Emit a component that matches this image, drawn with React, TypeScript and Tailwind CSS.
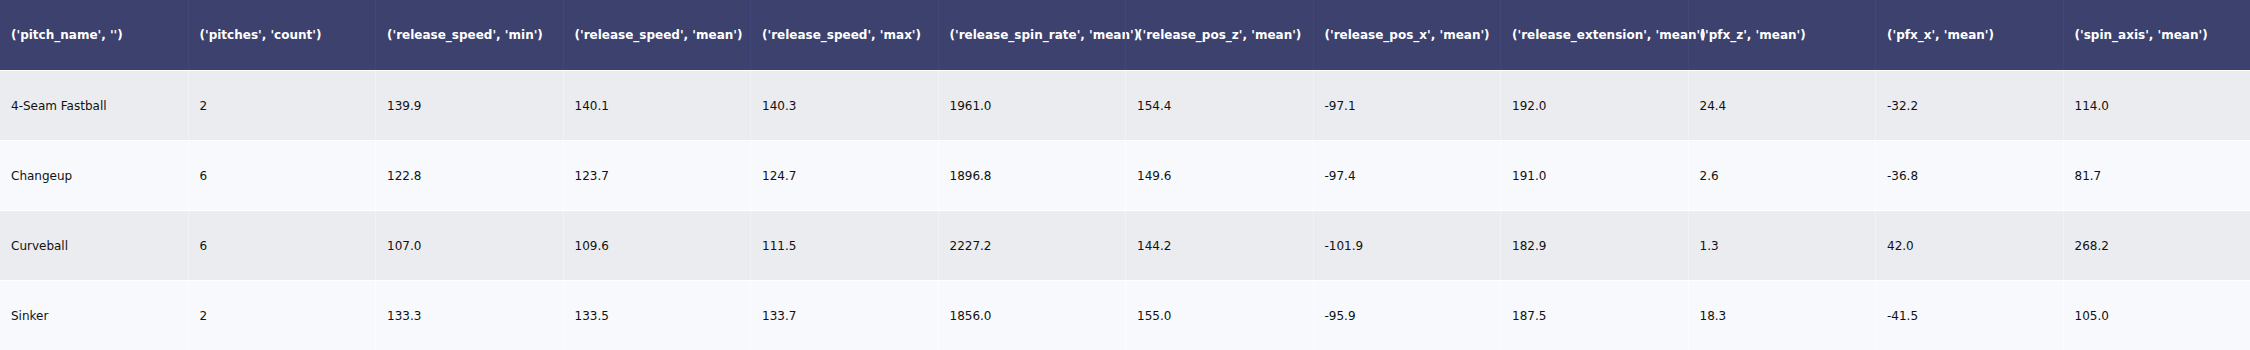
import * as React from "react";

/* ------------------------------ Data ------------------------------ */
const COLUMNS = [
  "('pitch_name', '')",
  "('pitches', 'count')",
  "('release_speed', 'min')",
  "('release_speed', 'mean')",
  "('release_speed', 'max')",
  "('release_spin_rate', 'mean')",
  "('release_pos_z', 'mean')",
  "('release_pos_x', 'mean')",
  "('release_extension', 'mean')",
  "('pfx_z', 'mean')",
  "('pfx_x', 'mean')",
  "('spin_axis', 'mean')",
];

const ROWS: string[][] = [
  ["4-Seam Fastball", "2", "139.9", "140.1", "140.3", "1961.0", "154.4", "-97.1", "192.0", "24.4", "-32.2", "114.0"],
  ["Changeup", "6", "122.8", "123.7", "124.7", "1896.8", "149.6", "-97.4", "191.0", "2.6", "-36.8", "81.7"],
  ["Curveball", "6", "107.0", "109.6", "111.5", "2227.2", "144.2", "-101.9", "182.9", "1.3", "42.0", "268.2"],
  ["Sinker", "2", "133.3", "133.5", "133.7", "1856.0", "155.0", "-95.9", "187.5", "18.3", "-41.5", "105.0"],
];

/* ----------------------------- Component --------------------------- */
export default function App() {
  return (
    <div
      className="w-[2250px] h-[350px] overflow-hidden bg-white text-[12px] leading-none"
      style={{ fontFamily: '"DejaVu Sans", Verdana, sans-serif' }}
    >
      {/* header */}
      <div className="grid grid-cols-[repeat(12,187.5px)] h-[70px] bg-[#3c416e]">
        {COLUMNS.map((c, i) => (
          <div
            key={i}
            className="flex items-center whitespace-nowrap pl-[11px] font-bold text-white border-l border-[#42477a] first:border-l-0"
          >
            {c}
          </div>
        ))}
      </div>

      {/* body */}
      {ROWS.map((row, r) => (
        <div
          key={r}
          className={[
            "grid grid-cols-[repeat(12,187.5px)] h-[70px] border-t border-white",
            r % 2 === 0 ? "bg-[#ebecf0]" : "bg-[#f8f9fd]",
          ].join(" ")}
        >
          {row.map((v, i) => (
            <div
              key={i}
              className={[
                "flex items-center whitespace-nowrap pl-[11px] text-[#111] first:border-l-0 border-l",
                r % 2 === 0 ? "border-[#f1f2f5]" : "border-[#fdfdff]",
              ].join(" ")}
            >
              {v}
            </div>
          ))}
        </div>
      ))}
    </div>
  );
}
